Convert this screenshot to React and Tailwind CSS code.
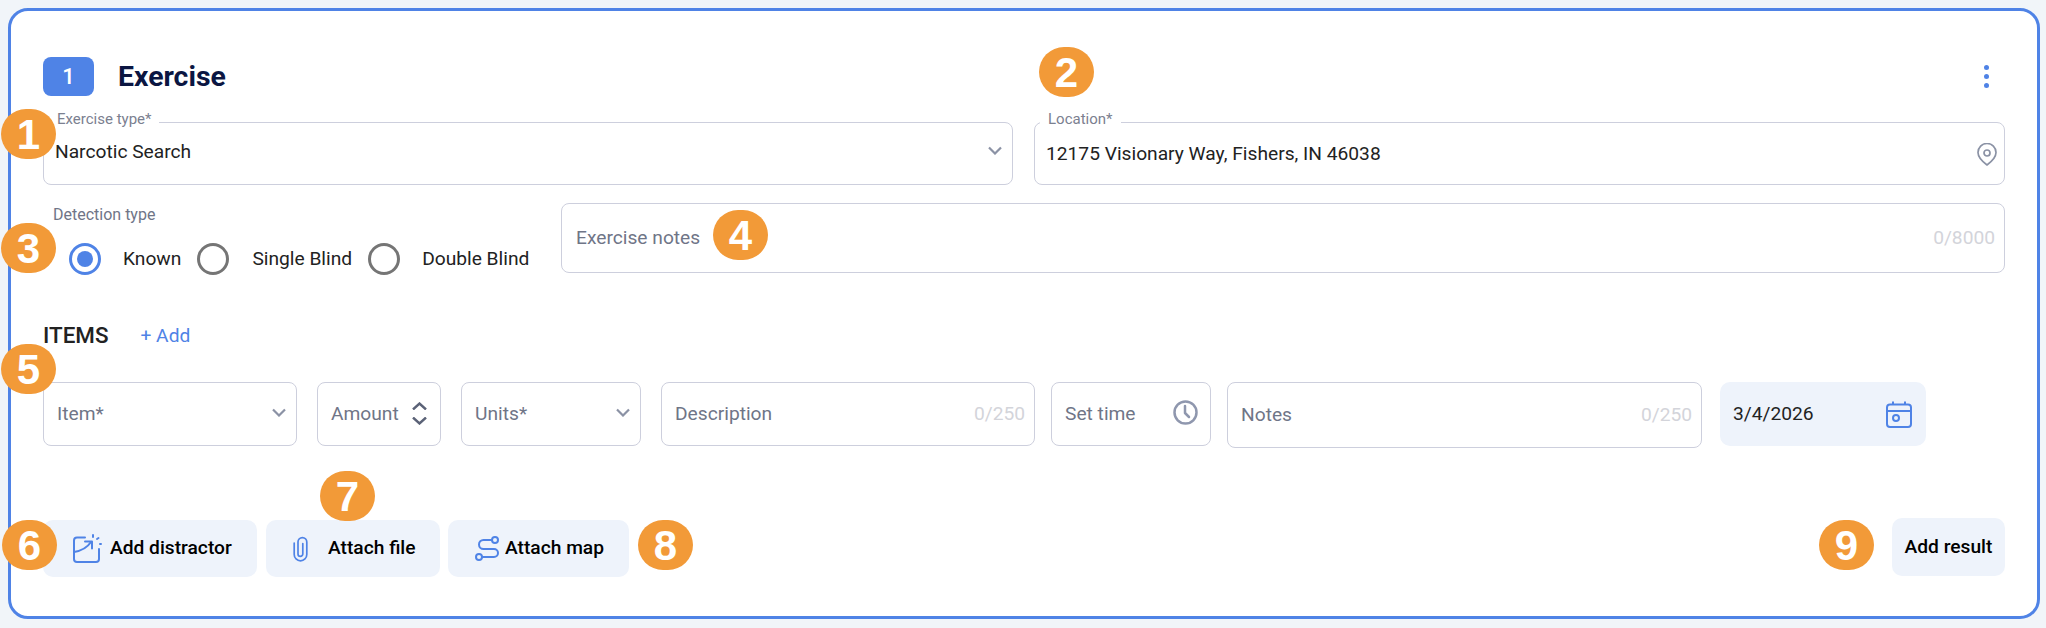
const BLUE = "#4f83e6";

function ChevronDown({className}) {
    return (
        <svg className={className} width="14" height="9" viewBox="0 0 14 9" fill="none" stroke="#8b92a5" strokeWidth="2.200">
            <path d="M1 1.500l6 6 6-6"/>
        </svg>
    );
}

function Distractor() {
    return (
        <svg width="30" height="30" viewBox="0 0 30 30" fill="none" stroke={BLUE} strokeWidth="2" strokeLinecap="round" strokeLinejoin="round">
            <path d="M13 3.500H5a3 3 0 0 0-3 3V25a3 3 0 0 0 3 3h19a3 3 0 0 0 3-3V15"/>
            <path d="M2 18c6-1 13-4 17-10"/>
            <path d="M13 7.500h7v7"/>
            <path d="M21 1v2M25 5l1.500-1M28 10h1"/>
        </svg>
    );
}

function PaperclipIcon() {
    return (
        <svg width="15" height="26" viewBox="0 0 15 26" fill="none" stroke={BLUE} strokeWidth="1.700" strokeLinecap="round">
            <path d="M9.800 7.500V18a2.400 2.400 0 0 1-4.800 0V6a4.400 4.400 0 0 1 8.800 0v12.500a6.300 6.300 0 0 1-12.600 0V7"/>
        </svg>
    );
}

function RouteIcon() {
    return (
        <svg width="25" height="27" viewBox="0 0 25 27" fill="none" stroke={BLUE} strokeWidth="2">
            <circle cx="20" cy="5" r="3"/>
            <circle cx="4" cy="22" r="3"/>
            <path d="M17 5H8.500a4.500 4.500 0 0 0 0 9H19a4 4 0 0 1 0 8H7"/>
        </svg>
    );
}

function CalendarIcon() {
    return (
        <svg width="26" height="27" viewBox="0 0 26 27" fill="none" stroke={BLUE} strokeWidth="2">
            <rect x="1" y="3.500" width="24" height="22.500" rx="3"/>
            <path d="M1 10h24M7 0.500v3M19 0.500v3"/>
            <circle cx="10" cy="17" r="3"/>
        </svg>
    );
}

function ClockIcon() {
    return (
        <svg width="25" height="25" viewBox="0 0 25 25" fill="none" stroke="#8f97ae" strokeWidth="2.500" strokeLinecap="round" strokeLinejoin="round">
            <circle cx="12.500" cy="12.500" r="11"/>
            <path d="M12 6v7l4 4"/>
        </svg>
    );
}

function PinIcon() {
    return (
        <svg className="shrink-0 mt-[1px]" width="20" height="23" viewBox="0 0 20 23" fill="none" stroke="#8b92a5" strokeWidth="1.700" strokeLinejoin="round">
            <path d="M10 22C6 19 1 15 1 9.500a9 9 0 0 1 18 0C19 15 14 19 10 22z"/>
            <circle cx="10" cy="10" r="3"/>
        </svg>
    );
}

function Field({label, value, right, className}) {
    return (
        <div className={`relative h-[63px] rounded-[8px] border border-[#cdcfdd] flex items-start justify-between pl-[11px] pr-[7px] ${className}`}>
            <span className="absolute -top-[12px] left-[5px] bg-white px-[8px] text-[15px] leading-[16px] text-[#7b8090]">{label}</span>
            <span className="text-[19.2px] leading-[24px] text-[#222]">{value}</span>
            {right}
        </div>
    );
}

function Input({label, right, className}) {
    return (
        <div className={`h-[64px] shrink-0 rounded-[8px] border border-[#cdcfdd] flex items-center justify-between pl-[13px] text-[19.2px] text-[#6f7587] ${className}`}>
            <span>{label}</span>
            {right}
        </div>
    );
}

function Radio({label, checked, gap}) {
    return (
        <label className={`flex items-center ${gap}`}>
            <span className={`w-[32px] h-[32px] rounded-full border-[3px] flex items-center justify-center ${checked ? "border-[#4f83e6]" : "border-[#757575]"}`}>
                {checked && <span className="w-[16px] h-[16px] rounded-full bg-[#4f83e6]"/>}
            </span>
            <span className="text-[19.2px] text-[#222] leading-[24px]">{label}</span>
        </label>
    );
}

function ActionButton({icon, label, className}) {
    return (
        <button className={`h-[57px] rounded-[10px] bg-[#eef3fb] flex items-center text-[19.2px] font-medium text-black ${className}`}>
            {icon}
            <span>{label}</span>
        </button>
    );
}

function Marker({n, className}) {
    return (
        <div className={`absolute w-[55px] h-[50px] rounded-full bg-[#f29a38] flex items-center justify-center text-white text-[42px] font-bold font-['Liberation_Sans',sans-serif] ${className}`}>
            {n}
        </div>
    );
}

export default function App() {
    return (
        <div className="relative h-[628px] bg-[#f1f5f9] pt-[8px] px-[8px] font-['Roboto',sans-serif] overflow-hidden">
            <div className="w-[2032px] h-[611px] rounded-[20px] border-[3px] border-[#4f83e6] bg-white px-[32px] pt-[46px]">
                {/* header */}
                <div className="flex items-center h-[39px]">
                    <div className="w-[51px] h-[39px] rounded-[8px] bg-[#4f83e6] flex items-center justify-center text-white text-[22px] font-medium">1</div>
                    <h1 className="ml-[24px] mt-[2px] text-[28.4px] font-bold text-[#0b1642]">Exercise</h1>
                    <div className="ml-auto mr-[16px] flex flex-col gap-[4px]">
                        <span className="w-[5px] h-[5px] rounded-full bg-[#4f83e6]"/>
                        <span className="w-[5px] h-[5px] rounded-full bg-[#4f83e6]"/>
                        <span className="w-[5px] h-[5px] rounded-full bg-[#4f83e6]"/>
                    </div>
                </div>

                <div className="mt-[26px] flex gap-[21px]">
                    <Field className="w-[970px] pt-[17px]" label="Exercise type*" value="Narcotic Search" right={<ChevronDown className="mt-[6px] mr-[3px]"/>}/>
                    <Field className="flex-1 pt-[19px]" label="Location*" value="12175 Visionary Way, Fishers, IN 46038" right={<PinIcon/>}/>
                </div>

                <div className="mt-[18px] flex">
                    <div className="w-[518px] shrink-0 pl-[10px]">
                        <div className="text-[16px] leading-[20px] text-[#6f7587] mt-[2px]">Detection type</div>
                        <div className="mt-[18px] pl-[16px] flex gap-[16px]">
                            <Radio checked label="Known" gap="gap-[22px]"/>
                            <Radio label="Single Blind" gap="gap-[23px]"/>
                            <Radio label="Double Blind" gap="gap-[22px]"/>
                        </div>
                    </div>
                    <div className="flex-1 h-[70px] rounded-[8px] border border-[#cdcfdd] flex items-center justify-between pl-[14px] pr-[9px] text-[19.2px]">
                        <span className="text-[#6f7587]">Exercise notes</span>
                        <span className="text-[#d3d4da]">0/8000</span>
                    </div>
                </div>

                <div className="mt-[49px] flex items-center h-[24px]">
                    <span className="text-[22.4px] font-medium text-[#222]">ITEMS</span>
                    <span className="ml-[32px] text-[19.2px] text-[#4f83e6]">+ Add</span>
                </div>

                <div className="mt-[34px] flex items-start">
                    <Input className="w-[254px] pr-[10px]" label="Item*" right={<ChevronDown className="mb-[4px]"/>}/>
                    <Input className="w-[124px] ml-[20px] pr-[13px]" label="Amount" right={
                        <span className="flex flex-col gap-[7px] mb-[2px]">
                            <svg width="15" height="8" viewBox="0 0 15 8" fill="none" stroke="#5b6277" strokeWidth="2.400"><path d="M1 7.500l6.500-6L14 7.500"/></svg>
                            <svg width="15" height="8" viewBox="0 0 15 8" fill="none" stroke="#5b6277" strokeWidth="2.400"><path d="M1 0.500l6.500 6 6.500-6"/></svg>
                        </span>
                    }/>
                    <Input className="w-[180px] ml-[20px] pr-[10px]" label="Units*" right={<ChevronDown className="mb-[4px]"/>}/>
                    <Input className="w-[374px] ml-[20px] pr-[9px]" label="Description" right={<span className="text-[#d3d4da]">0/250</span>}/>
                    <Input className="w-[160px] ml-[16px] pr-[12px]" label="Set time" right={<span className="mb-[4px]"><ClockIcon/></span>}/>
                    <Input className="w-[475px] h-[66px] ml-[16px] pr-[9px]" label="Notes" right={<span className="text-[#d3d4da]">0/250</span>}/>
                    <div className="w-[206px] h-[64px] ml-[18px] rounded-[10px] bg-[#eef3fb] flex items-center justify-between pl-[13px] pr-[14px] text-[19.2px] text-[#222]">
                        <span>3/4/2026</span>
                        <CalendarIcon/>
                    </div>
                </div>

                <div className="mt-[72px] flex items-start">
                    <ActionButton className="w-[214px] pl-[29px] gap-[8px]" icon={<Distractor/>} label="Add distractor"/>
                    <ActionButton className="w-[174px] ml-[9px] pl-[27px] gap-[20px]" icon={<PaperclipIcon/>} label="Attach file"/>
                    <ActionButton className="w-[181px] ml-[8px] pl-[27px] gap-[5px]" icon={<RouteIcon/>} label="Attach map"/>
                    <ActionButton className="w-[113px] h-[58px] ml-auto justify-center -mt-[2px]" label="Add result"/>
                </div>
            </div>

            {/* numbered callouts on top of the page */}
            <Marker n="1" className="left-[1px] top-[109px]"/>
            <Marker n="2" className="left-[1039px] top-[47px]"/>
            <Marker n="3" className="left-[1px] top-[223px]"/>
            <Marker n="4" className="left-[713px] top-[210px]"/>
            <Marker n="5" className="left-[1px] top-[344px]"/>
            <Marker n="6" className="left-[2px] top-[520px]"/>
            <Marker n="7" className="left-[320px] top-[471px]"/>
            <Marker n="8" className="left-[638px] top-[520px]"/>
            <Marker n="9" className="left-[1819px] top-[520px]"/>
        </div>
    );
}
